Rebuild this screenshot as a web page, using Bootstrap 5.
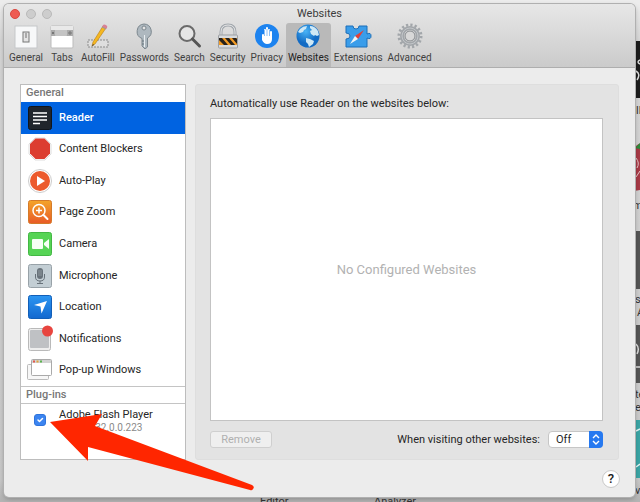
<!DOCTYPE html>
<html lang="en">
<head>
<meta charset="utf-8">
<meta name="viewport" content="width=device-width, initial-scale=1">
<title>Websites</title>
<link rel="stylesheet" href="https://cdn.jsdelivr.net/npm/bootstrap@5.3.0/dist/css/bootstrap.min.css">
<style>
  body { font-family: Roboto, "Liberation Sans", sans-serif; font-size: 11px; line-height: 14px; color: #262626; background: #d2d2d2; }
  .stage { min-height: 100vh; padding: 4px 5px 5px 4px; background: linear-gradient(#ececec 4px, #d6d6d6 40px, #c8c8c8 480px, #b4b4b4 500px); }
  .desk { inset: 0; }
  .desk span { position: absolute; color: #333; line-height: 12px; white-space: nowrap; }
  .pane { background: #ececec; border-radius: 5px; box-shadow: 0 0 0 1px #b0b0b0, 0 2px 5px rgba(0,0,0,.25); min-height: calc(100vh - 9px); }
  .topbar { background: linear-gradient(#e7e7e7, #cbcbcb); border-bottom: 1px solid #aeaeae; border-radius: 5px 5px 0 0; }
  .titlerow { height: 19px; padding-left: 6px; }
  .dots { gap: 6px; }
  .dot { width: 10px; height: 10px; border-radius: 50%; border: 1px solid #b9b9b9; background: #cdcdcd; }
  .dot.close-dot { background: #ee5b52; border-color: #d9473f; }
  .caption { color: #3c3c3c; left: 0; right: 0; top: 3px; }
  .tools { padding-left: 3px; gap: 1px; }
  .tool { font-size: 10px; line-height: 12px; padding: 0 2px 3px; min-width: 30px; height: 44px; color: #3f3f3f; border-radius: 3px 3px 0 0; }
  .tool svg { width: 28px; height: 26px; }
  .tool.active { background: #b9b9b9; color: #222; }
  .bodyrow { padding: 16px 16px 0; gap: 9px; }
  .side { width: 166px; background: #fff; border: 1px solid #bdbdbd; }
  .head { height: 17px; padding-left: 5px; line-height: 16px; font-weight: 500; color: #777; }
  .entry { padding-left: 7px; gap: 7px; color: #262626; }
  .entry svg { width: 24px; height: 24px; }
  .entry.active { background: #0063e1; color: #fff; font-weight: 500; }
  .plugs { border-top: 1px solid #c4c4c4; }
  .plugs .head { border-bottom: 1px solid #c4c4c4; }
  .plug { height: 55px; padding: 4px 0 0 13px; gap: 13px; }
  .plug .form-check-input { width: 12px; height: 12px; margin: 6px 0 0; border-radius: 3px; min-height: 0; }
  .plug .form-check-input:checked { background-color: #3b84f0; border-color: #2f74dc; }
  .ver { font-size: 10px; line-height: 12px; color: #8a8a8a; }
  .detail { background: #e3e3e3; border: 1px solid #dedede; border-radius: 3px; padding: 12px 15px 11px 14px; }
  .sites { background: #fff; border: 1px solid #c3c3c3; color: #b2b2b2; font-size: 13px; margin: 7px 0 10px; }
  .rm, .rm:disabled { width: 62px; height: 17px; font-size: 11px; line-height: 14px; padding: 0; opacity: 1; background: #efefef; border: 1px solid #cfcfcf; border-radius: 3px; color: #b0b0b0; }
  .pick { width: 55px; }
  .pick select { width: 100%; height: 17px; font-size: 11px; line-height: 14px; padding: 0 0 0 7px; background: #fff; border: 1px solid #c6c6c6; border-radius: 4px; color: #262626; appearance: none; }
  .pick svg { right: 0; top: 0; width: 14px; height: 17px; pointer-events: none; }
  .foot { padding: 10px 15px 9px; }
  .help { width: 18px; height: 18px; padding: 0; line-height: 16px; font-size: 13px; font-weight: 500; background: #fff; border: 1px solid #c9c9c9; border-radius: 50%; color: #222; }
  .pointer { left: 46px; top: 410px; width: 212px; height: 86px; pointer-events: none; }
</style>
</head>
<body>
<div class="stage position-relative overflow-hidden">
  <div class="desk position-absolute overflow-hidden" aria-hidden="true">
    <svg class="position-absolute end-0 top-0" width="8" height="502" viewBox="632 0 8 502">
      <path fill="#1d1d1d" d="M632 41h8v57h-8z"/><path d="M640 60q-4 2 0 4M636 71q5 3 1 9" stroke="#ddd" stroke-width="1.5" fill="none"/>
      <path fill="#a83a46" d="M632 150q8-8 8-6v46q-8 2-8-1z"/><path fill="#2f8b3c" d="M635 148l5-5v6z"/><path d="M636 158q4 5 1 10m3 3l-4 6" stroke="#e7c6c8" fill="none"/>
      <path fill="#555" d="M632 231h8v58h-8zM632 325h8v58h-8z"/><path d="M636 344q4 4 1 10M636 367h4" stroke="#ddd" stroke-width="1.5" fill="none"/>
      <path fill="#3ba5a5" d="M632 420h8v58h-8z"/><path d="M640 429l-4 2m4 33l-4 3" stroke="#e4f4f4" stroke-width="1.5"/>
    </svg>
    <span style="left:636px;top:105px">ll</span><span style="left:633px;top:200px">m</span>
    <span style="left:635px;top:294px">s</span><span style="left:637px;top:307px">A</span>
    <span style="left:635px;top:389px">te</span><span style="left:635px;top:402px">ea</span><span style="left:635px;top:485px">v</span>
    <span style="left:260px;top:496px">Editor</span><span style="left:374px;top:496px">Analyzer</span>
  </div>

  <main class="pane position-relative d-flex flex-column">
    <header class="topbar">
      <div class="titlerow position-relative d-flex align-items-center">
        <div class="dots d-flex"><span class="dot close-dot"></span><span class="dot"></span><span class="dot"></span></div>
        <div class="caption position-absolute text-center">Websites</div>
      </div>
      <nav class="tools d-flex" aria-label="Preferences">
        <a href="#" class="tool d-flex flex-column align-items-center justify-content-between text-decoration-none"><svg viewBox="0 0 28 26"><rect x="3" y="3" width="22" height="22" fill="#f7f8f9" stroke="#c5c7c9"/><rect x="11" y="9" width="6" height="10" fill="#e4e4e4" stroke="#777"/><path d="M13 10h2v5h-2z" fill="#aaa"/></svg>General</a>
        <a href="#" class="tool d-flex flex-column align-items-center justify-content-between text-decoration-none"><svg viewBox="0 0 28 26"><rect x="3" y="3" width="22" height="22" rx="1" fill="#fff" stroke="#bbb"/><path d="M3 3h22v4H3z" fill="#e9e9e9"/><path d="M3 7h22v6H3z" fill="#aaa"/><path d="M7 7h12v5q0 1-1 1H8q-1 0-1-1z" fill="#c4c4c4"/><path d="M22 8v4m-2-2h4M4 9l2 2m0-2l-2 2" stroke="#777"/></svg>Tabs</a>
        <a href="#" class="tool d-flex flex-column align-items-center justify-content-between text-decoration-none"><svg viewBox="0 0 28 26"><path d="M4 17h20v7H4z" fill="#dedede" stroke="#8b8b8b" stroke-dasharray="2 1"/><path d="M19 3l3 2-11 16-3 2 1-4z" fill="#f5b821" stroke="#b87b12" stroke-width=".6"/><path d="M18 4l1-2q1-1 3 0t1 3l-1 1z" fill="#d98296"/><path d="M18 4l4 2" stroke="#999"/><path d="M8 23l1-2 1 1z" fill="#333"/></svg>AutoFill</a>
        <a href="#" class="tool d-flex flex-column align-items-center justify-content-between text-decoration-none"><svg viewBox="0 0 28 26"><path d="M14 1a7.500 7.500 0 0 1 3.500 14v9L15 26l-3-3V15.500A7.500 7.500 0 0 1 14 1z" fill="#aeb8bf" stroke="#7c878e"/><circle cx="14" cy="5" r="2" fill="#e5e5e5" stroke="#7c878e"/><path d="M14.500 12v12" stroke="#e9eef1"/><path d="M12 18h2m-2 3h2" stroke="#68747c"/></svg>Passwords</a>
        <a href="#" class="tool d-flex flex-column align-items-center justify-content-between text-decoration-none"><svg viewBox="0 0 28 26"><circle cx="12" cy="10.500" r="7.500" fill="#e6e6e6" stroke="#6b6b6b" stroke-width="2"/><path d="M17.500 16l7 7" stroke="#555" stroke-width="3" stroke-linecap="round"/></svg>Search</a>
        <a href="#" class="tool d-flex flex-column align-items-center justify-content-between text-decoration-none"><svg viewBox="0 0 28 26"><path d="M7 13V9q0-7 7-7t7 7v4" stroke="#9fa5ab" stroke-width="3" fill="none"/><path d="M7 13V9q0-7 7-7t7 7v4" stroke="#e8e8e8" fill="none"/><rect x="4.500" y="12" width="19" height="13" rx="1" fill="#d7dadd" stroke="#9c9fa3"/><path d="M5 15h18v7H5z" fill="#f29b26"/><path d="M5 15h3l6 7h-4l-5-5zM11 15h4l6 7h-4zM18 15h4l1 1v5z" fill="#28221b"/></svg>Security</a>
        <a href="#" class="tool d-flex flex-column align-items-center justify-content-between text-decoration-none"><svg viewBox="0 0 28 26"><circle cx="14" cy="13" r="12" fill="#1d83ef"/><path d="M9 12q0-1 1-1t1 1V7q0-1 1-1t1 1v4-6q0-1 1-1t1 1v6-4q0-1 1-1t1 1v6V9q0-1 1-1t1 1v7q0 5-5 5-3 0-5-4z" fill="#fff"/><path d="M11.500 7v6m2.500-7v7m2.500-6v6" stroke="#1d83ef" stroke-width=".5"/></svg>Privacy</a>
        <a href="#" class="tool active d-flex flex-column align-items-center justify-content-between text-decoration-none" aria-current="page"><svg viewBox="0 0 28 26"><defs><radialGradient id="g" cx=".4" cy=".3"><stop stop-color="#49b4f7"/><stop offset="1" stop-color="#126bc4"/></radialGradient></defs><circle cx="14" cy="13" r="11.500" fill="url(#g)"/><path d="M6 6q3-3 7-3l-1 3-2 1-1 2-3 1-2-1zM16 3q5 0 8 5l1 4-2 1-2-1-1 1-3-2-1-3 2-1-2-2zM12 15l4 1 4 2-1 3-4 3-1-3-2-2z" fill="#cfe8f5"/></svg>Websites</a>
        <a href="#" class="tool d-flex flex-column align-items-center justify-content-between text-decoration-none"><svg viewBox="0 0 28 26"><path d="M2 3h7q0 3 3 3t3-3h8v8q4-2 4 2t-4 2v9H2v-8q4 0 4-3t-4-3z" fill="#3a9dea" stroke="#1c6fb8"/><path d="M20 7l-6 9-3-3z" fill="#e34038"/><path d="M6 21l5-8 3 3z" fill="#f4f4f4"/></svg>Extensions</a>
        <a href="#" class="tool d-flex flex-column align-items-center justify-content-between text-decoration-none"><svg viewBox="0 0 28 26"><circle cx="14" cy="13" r="11" fill="none" stroke="#a2a6aa" stroke-width="3" stroke-dasharray="2.200 2.120"/><circle cx="14" cy="13" r="8" fill="none" stroke="#a2a6aa" stroke-width="4"/><circle cx="14" cy="13" r="8" fill="none" stroke="#c3c6c9"/><circle cx="14" cy="13" r="5" fill="#d8d8d8" stroke="#85898d"/></svg>Advanced</a>
      </nav>
    </header>

    <div class="bodyrow d-flex flex-fill">
      <aside class="side d-flex flex-column flex-shrink-0">
        <div class="head">General</div>
        <nav class="d-flex flex-column flex-fill" aria-label="General">
          <a href="#" class="entry active d-flex flex-fill align-items-center text-decoration-none" aria-current="true"><svg viewBox="0 0 24 24"><rect x=".5" y=".5" width="23" height="23" rx="2" fill="#20252c" stroke="#10151c"/><path d="M5 7h14M5 10.500h14M5 14h14M5 17.500h7" stroke="#fff" stroke-width="1.500"/></svg>Reader</a>
          <a href="#" class="entry d-flex flex-fill align-items-center text-decoration-none"><svg viewBox="0 0 24 24"><path d="M7 1h10l6 6v10l-6 6H7l-6-6V7z" fill="#fff" stroke="#ddd"/><path d="M7.500 1.500h9l5.500 5.500v9.500L16.500 22h-9L2 16.500V7z" fill="#dc3d30"/></svg>Content Blockers</a>
          <a href="#" class="entry d-flex flex-fill align-items-center text-decoration-none"><svg viewBox="0 0 24 24"><circle cx="12" cy="12" r="11.500" fill="#fff" stroke="#ccc"/><circle cx="12" cy="12" r="10" fill="#ec5a2c"/><path d="M9 7l8 5-8 5z" fill="#fff"/></svg>Auto-Play</a>
          <a href="#" class="entry d-flex flex-fill align-items-center text-decoration-none"><svg viewBox="0 0 24 24"><defs><linearGradient id="o" x2="0" y2="1"><stop stop-color="#f4a52b"/><stop offset="1" stop-color="#e85a27"/></linearGradient></defs><rect x=".5" y=".5" width="23" height="23" rx="2" fill="url(#o)" stroke="#d47a2a"/><circle cx="11" cy="10.500" r="6" fill="none" stroke="#fff" stroke-width="1.500"/><path d="M8 10.500h6m-3-3v6" stroke="#fff" stroke-width="1.500"/><path d="M15.500 15l4 4" stroke="#fff" stroke-width="2" stroke-linecap="round"/></svg>Page Zoom</a>
          <a href="#" class="entry d-flex flex-fill align-items-center text-decoration-none"><svg viewBox="0 0 24 24"><rect x=".5" y=".5" width="23" height="23" rx="2" fill="#56d455" stroke="#43b744"/><rect x="4" y="7" width="11" height="10" rx="1" fill="#f6fff5"/><path d="M16 11l5-4v10l-5-4z" fill="#f6fff5"/></svg>Camera</a>
          <a href="#" class="entry d-flex flex-fill align-items-center text-decoration-none"><svg viewBox="0 0 24 24"><rect x=".5" y=".5" width="23" height="23" rx="2" fill="#c3ced4" stroke="#98a2a8"/><rect x="9" y="4" width="6" height="11" rx="3" fill="#68727a"/><path d="M7.500 10v3q0 4 4.500 4t4.500-4v-3M12 17v2.500m-3 0h6" stroke="#68727a" fill="none"/><path d="M10 7h4m-4 2h4m-4 2h4" stroke="#a5afb5" stroke-width=".6"/></svg>Microphone</a>
          <a href="#" class="entry d-flex flex-fill align-items-center text-decoration-none"><svg viewBox="0 0 24 24"><defs><linearGradient id="b" x2="0" y2="1"><stop stop-color="#2c96f2"/><stop offset="1" stop-color="#1268cf"/></linearGradient></defs><rect x=".5" y=".5" width="23" height="23" rx="2" fill="url(#b)" stroke="#125fb8"/><path d="M19 6l-5.500 12.500-1-7-6.500-1.500z" fill="#fff"/></svg>Location</a>
          <a href="#" class="entry d-flex flex-fill align-items-center text-decoration-none"><svg viewBox="0 0 24 24" overflow="visible"><rect x=".5" y="1.500" width="22" height="22" rx="2" fill="#eee" stroke="#b9b9b9"/><rect x="2" y="3" width="19" height="18" rx="1" fill="#bfc1c4"/><circle cx="19.500" cy="4" r="5.500" fill="#e8453f"/></svg>Notifications</a>
          <a href="#" class="entry d-flex flex-fill align-items-center text-decoration-none"><svg viewBox="0 0 24 24" overflow="visible"><rect x="-.5" y="6.500" width="21" height="15" rx="1" fill="#f7f7f7" stroke="#bbb"/><rect x="3.500" y="1.500" width="20" height="16" rx="1" fill="#fff" stroke="#aaa"/><path d="M4 2h19v3H4z" fill="#d3d3d3"/><path d="M5 3.500h2" stroke="#e4574b" stroke-width="2"/><path d="M8.500 3.500h2" stroke="#dfa53b" stroke-width="2"/><path d="M12 3.500h2" stroke="#5cb350" stroke-width="2"/></svg>Pop-up Windows</a>
        </nav>
        <div class="plugs">
          <div class="head">Plug-ins</div>
          <div class="plug d-flex align-items-start">
            <input class="form-check-input" type="checkbox" id="flash" checked>
            <label for="flash"><span class="d-block">Adobe Flash Player</span><span class="ver d-block">Version 32.0.0.223</span></label>
          </div>
        </div>
      </aside>

      <section class="detail d-flex flex-column flex-fill">
        <div>Automatically use Reader on the websites below:</div>
        <div class="sites d-flex flex-fill align-items-center justify-content-center">No Configured Websites</div>
        <div class="d-flex align-items-center justify-content-between">
          <button type="button" class="btn rm" disabled>Remove</button>
          <div class="d-flex align-items-center gap-2">
            <label for="other">When visiting other websites:</label>
            <div class="pick position-relative d-flex">
              <select id="other"><option>Off</option><option>On</option></select>
              <svg class="position-absolute" viewBox="0 0 14 17"><path d="M0 0h10q4 0 4 4v9q0 4-4 4H0z" fill="#2679f0"/><path d="M4 7l3-3 3 3M4 10l3 3 3-3" stroke="#fff" stroke-width="1.400" fill="none"/></svg>
            </div>
          </div>
        </div>
      </section>
    </div>
    <footer class="foot d-flex justify-content-end"><button type="button" class="btn help">?</button></footer>
  </main>

  <svg class="pointer position-absolute" viewBox="46 410 212 86" aria-hidden="true"><path d="M50 422l52-8-7 12 157 59q3 2 1 4-1 2-3 1L88 447v14z" fill="#ff2600"/></svg>
</div>
<script src="https://cdn.jsdelivr.net/npm/bootstrap@5.3.0/dist/js/bootstrap.bundle.min.js"></script>
</body>
</html>
